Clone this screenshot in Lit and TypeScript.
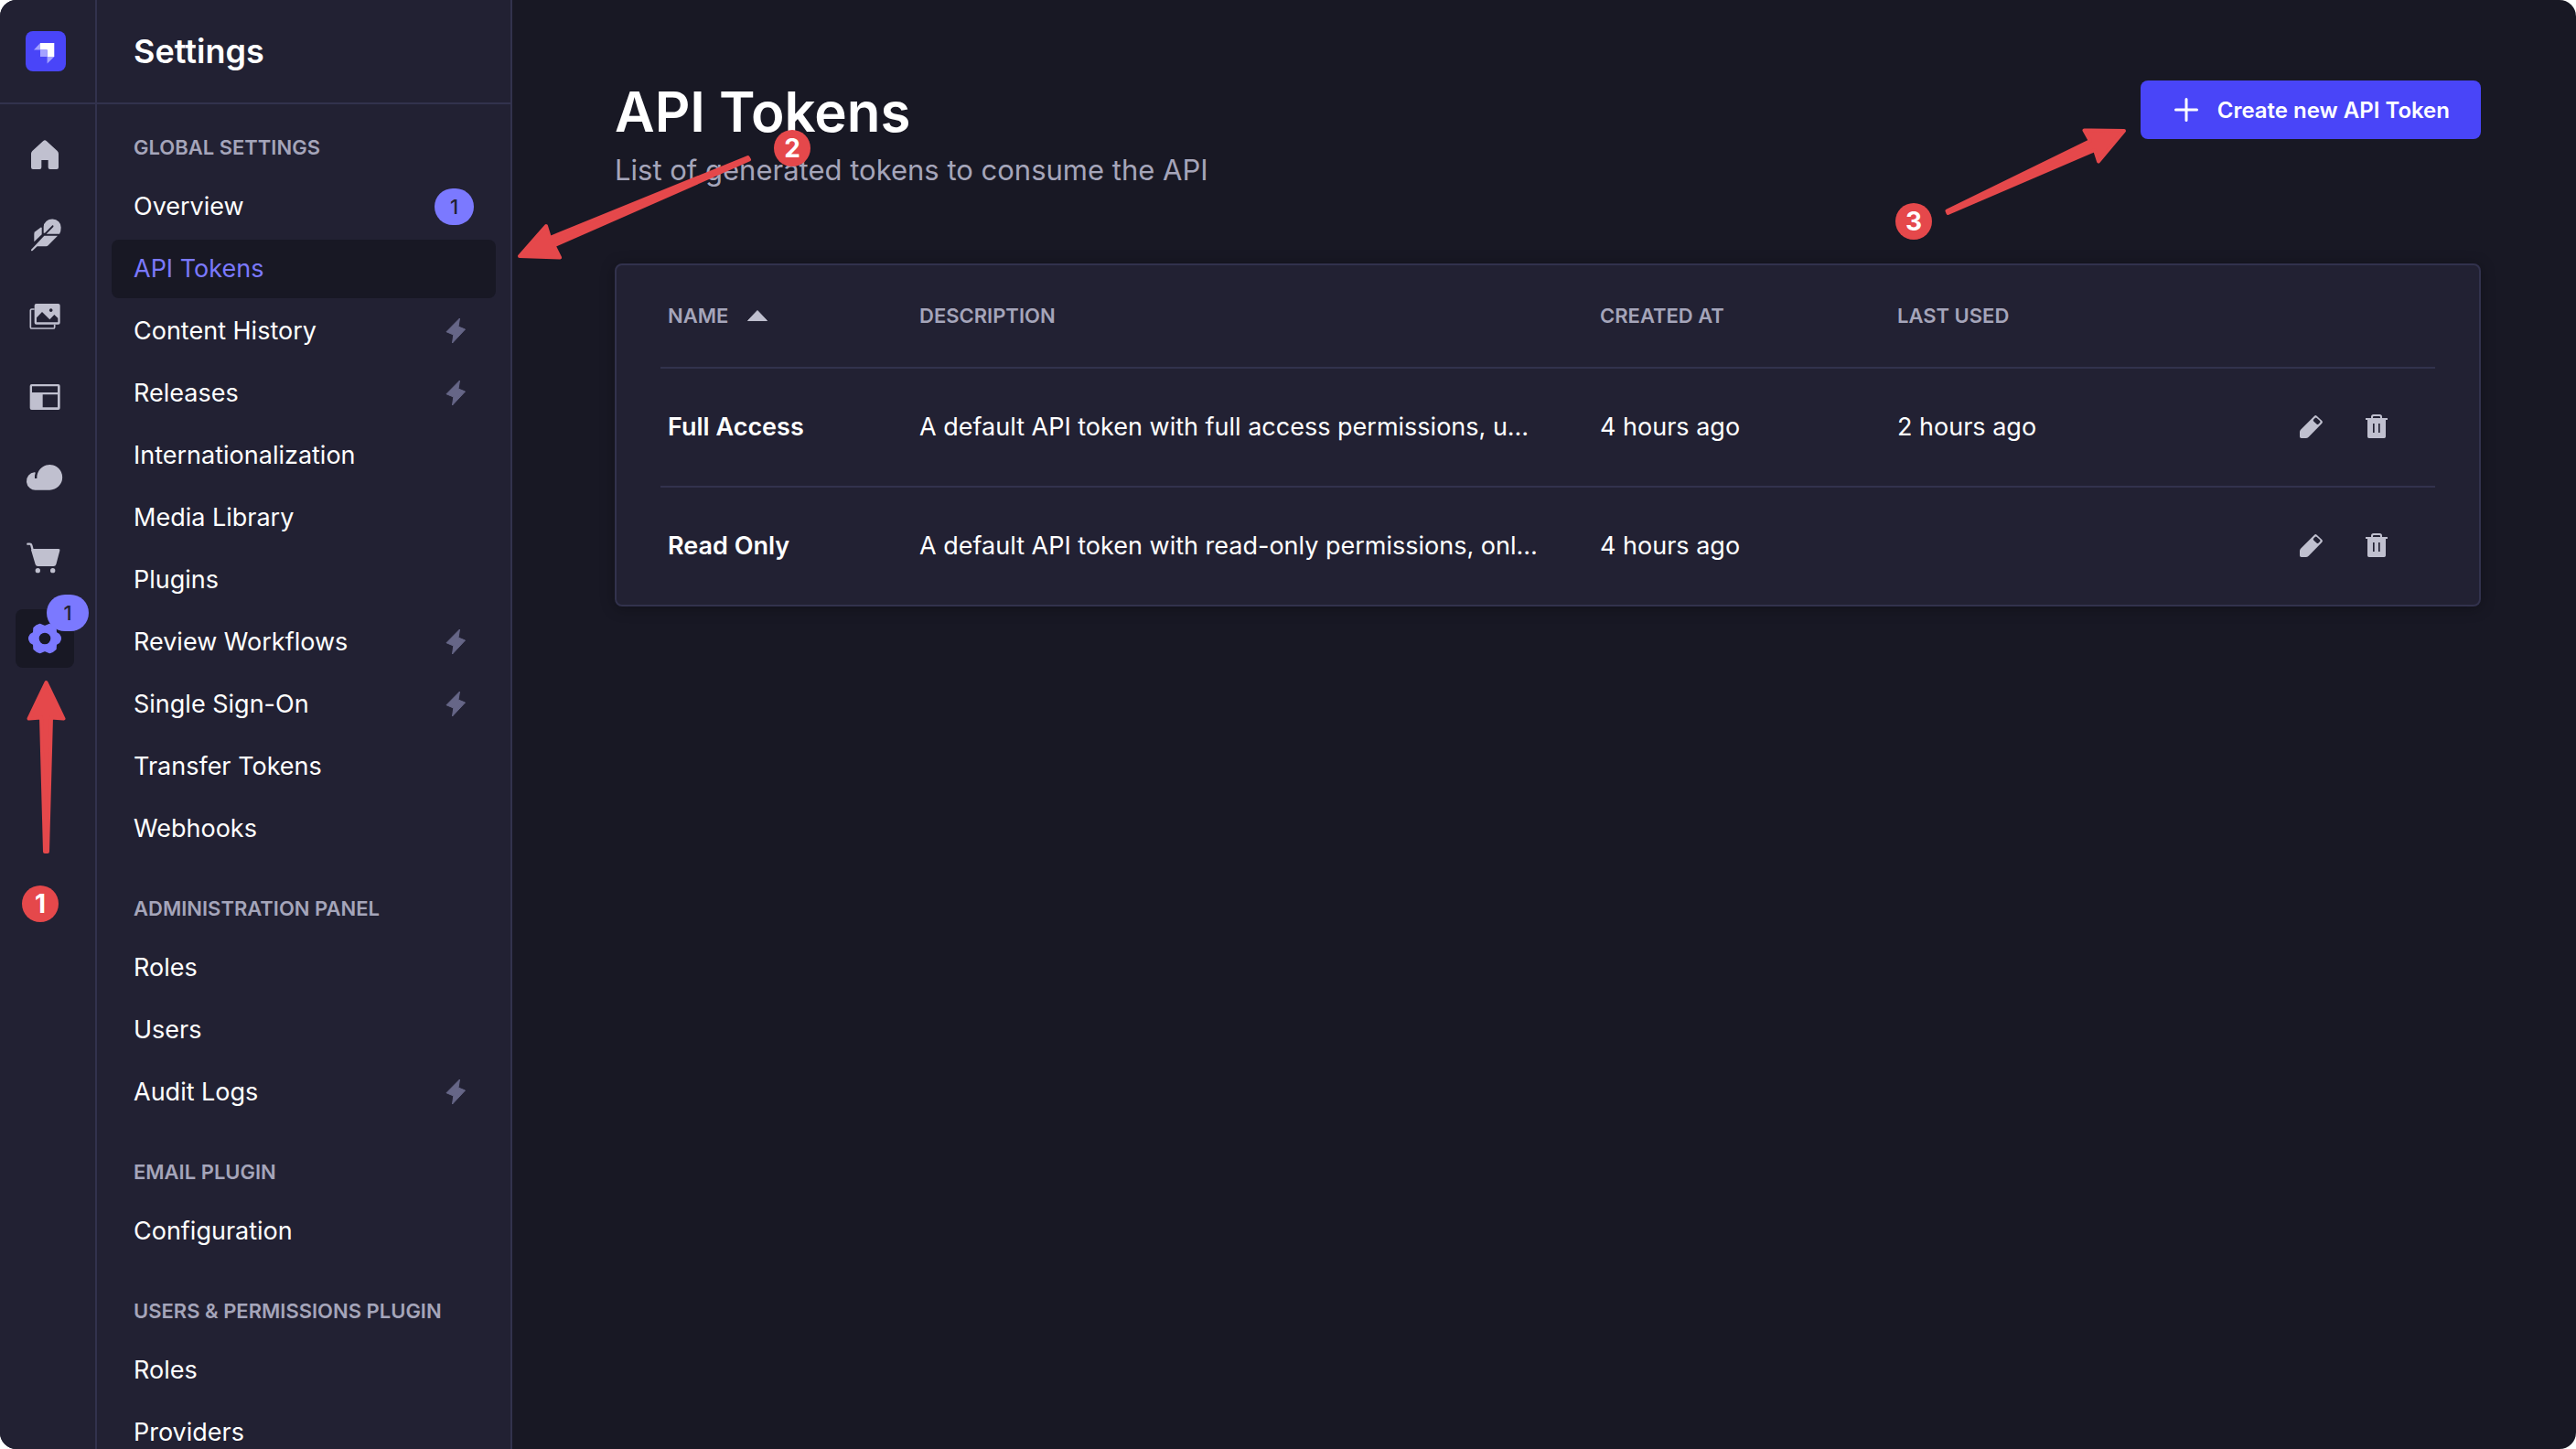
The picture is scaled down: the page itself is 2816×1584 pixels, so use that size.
import { LitElement, html, css, svg, nothing } from "lit";
import type { TemplateResult, SVGTemplateResult } from "lit";
import { customElement, property } from "lit/decorators.js";
import { classMap } from "lit/directives/class-map.js";

interface NavItem {
  label: string;
  active?: boolean;
  badge?: string;
  paid?: boolean;
}

interface NavSection {
  title: string;
  items: NavItem[];
}

interface Token {
  name: string;
  description: string;
  createdAt: string;
  lastUsed: string;
}

interface Glyph {
  box: string;
  shape: SVGTemplateResult;
}

const glyphs: Record<string, Glyph> = {
  home: {
    box: "99 102 96 96",
    shape: svg`<path d="M102 144Q102 139 106 135L142 102Q147 98 152 102L188 135Q192 139 192 144V189Q192 195 186 195H164Q158 195 158 189V165H136V189Q136 195 130 195H108Q102 195 102 189Z"/>`,
  },
  feather: {
    box: "99 366 96 96",
    shape: svg`<path d="M143 404V384A28 26 0 0 1 200 386Q200 400 195 407H152L175 384Q177 378 172 379L147 404Z"/><path d="M112 433V407Q112 403 115 400L133 386Q137 384 137 388V409Z"/><path d="M145 413H189L158 445Q155 448 151 448H122L107 462Q101 465 102 459Z"/>`,
  },
  images: {
    box: "99 630 96 96",
    shape: svg`<path fill-rule="evenodd" d="M119 636H191Q197 636 197 642V698Q197 704 191 704H119Q113 704 113 698V642Q113 636 119 636ZM120 697H190V683L178 672L163 688L138 663L120 682ZM167 652A5.500 5.500 0 1 0 167.100 652Z"/><path fill="none" stroke="currentColor" stroke-width="5" stroke-linejoin="round" d="M113 654H104Q100 654 100 658V713Q100 717 104 717H174Q179 717 179 713V704"/>`,
  },
  layout: {
    box: "99 114 96 96",
    shape: svg`<path fill-rule="evenodd" d="M104 120H191Q197 120 197 126V198Q197 204 191 204H104Q98 204 98 198V126Q98 120 104 120ZM105 127V147H189V127ZM140 154V196H189V154Z"/>`,
  },
  cloud: {
    box: "99 378 96 96",
    shape: svg`<path d="M119 467A29 29 0 0 1 113 409Q116 408 116 411Q113 419 114 429H121C120 405 138 384 163 384A41 41 0 0 1 163 467Z"/>`,
  },
  cart: {
    box: "99 642 96 96",
    shape: svg`<path d="M106 660H192Q198 660 196 666L184 711Q182 717 176 717H124Q118 717 116 711L102 664Z"/><path fill="none" stroke="currentColor" stroke-width="7" stroke-linecap="round" stroke-linejoin="round" d="M91 644H98Q102 644 103 648L107 664"/><circle cx="124" cy="731" r="8"/><circle cx="173" cy="731" r="8"/>`,
  },
  gear: {
    box: "-48 -48 96 96",
    shape: svg`<path fill-rule="evenodd" stroke="currentColor" stroke-width="4" stroke-linejoin="round" d="M47 -13Q57 0 47 13L37 19L36 35Q28 44 16 47L0 40L-16 47Q-28 44 -36 35L-37 19L-47 13Q-57 0 -47 -13L-37 -19L-36 -35Q-28 -44 -16 -47L0 -40L16 -47Q28 -44 36 -35L37 -19ZM0 -21A21 21 0 1 0 0 21A21 21 0 1 0 0 -21Z"/>`,
  },
  pencil: {
    box: "60 63 96 96",
    shape: svg`<path fill-rule="evenodd" d="M72 127Q72 122 75 119L120 74Q124 70 128 74L145 90Q149 94 145 98L101 143Q97 147 92 147H77Q72 147 72 142ZM117 86Q115 89 118 92L128 101Q131 103 133 101L139 95Q141 93 138 90L128 81Q125 78 122 81Z"/>`,
  },
  trash: {
    box: "276 63 96 96",
    shape: svg`<path fill-rule="evenodd" d="M288 81H306V77Q306 69 314 69H334Q342 69 342 77V81H360V87H354V142Q354 147 349 147H299Q294 147 294 142V87H288ZM312 81H336V78Q336 75 333 75H315Q312 75 312 78ZM312 99V129H317V99ZM330 99V129H335V99Z"/>`,
  },
  plus: {
    box: "0 0 32 32",
    shape: svg`<path fill="none" stroke="currentColor" stroke-width="3" stroke-linecap="round" d="M16 4.500V27.500M4.500 16H27.500"/>`,
  },
  bolt: {
    box: "0 0 32 32",
    shape: svg`<path stroke="currentColor" stroke-linejoin="round" d="M20.500 2L19 11L26.500 14L12.500 29L13.800 20L6 16.700Z"/>`,
  },
  sort: {
    box: "0 0 24 24",
    shape: svg`<path stroke="currentColor" stroke-linejoin="round" d="M12 6.500L22.500 17.500H1.500Z"/>`,
  },
};

const icon = (name: string): TemplateResult => html`
  <svg class="icon ${name}" viewBox=${glyphs[name].box} aria-hidden="true">${glyphs[name].shape}</svg>
`;

const iconStyles = css`
  .icon {
    display: block;
    width: 32px;
    height: 32px;
    flex: none;
    overflow: visible;
    fill: currentColor;
  }
`;

const reset = css`
  * {
    box-sizing: border-box;
  }
  a {
    color: inherit;
    text-decoration: none;
  }
  h1,
  h2,
  p,
  ul {
    margin: 0;
    padding: 0;
  }
  ul {
    list-style: none;
  }
  button {
    font: inherit;
    border: 0;
    margin: 0;
    padding: 0;
    color: inherit;
    background: none;
    cursor: pointer;
  }
`;

@customElement("main-rail")
export class MainRail extends LitElement {
  static styles = [
    reset,
    iconStyles,
    css`
      :host {
        display: block;
        border-right: 2px solid #32324d;
        background: #222133;
      }
      .brand {
        display: flex;
        justify-content: center;
        height: 114px;
        padding: 34px 22px 0 18px;
        border-bottom: 2px solid #32324d;
      }
      .logo {
        display: block;
        width: 44px;
        height: 44px;
      }
      .links {
        display: flex;
        flex-direction: column;
        gap: 24px;
        padding: 24px 23px 24px 17px;
      }
      .link {
        position: relative;
        display: grid;
        place-items: center;
        width: 64px;
        height: 64px;
        border-radius: 8px;
        color: #c0c0cf;
      }
      .link.active {
        background: #181824;
        color: #7b79ff;
      }
      .badge {
        position: absolute;
        top: -16px;
        right: -16px;
        width: 46px;
        border-radius: 20px;
        background: #7b79ff;
        color: #222133;
        font-size: 22px;
        font-weight: 500;
        line-height: 40px;
        text-align: center;
      }
    `,
  ];

  private links = [
    { icon: "home", label: "Home" },
    { icon: "feather", label: "Content Manager" },
    { icon: "images", label: "Media Library" },
    { icon: "layout", label: "Content-Type Builder" },
    { icon: "cloud", label: "Deploy" },
    { icon: "cart", label: "Marketplace" },
    { icon: "gear", label: "Settings", active: true, badge: "1" },
  ];

  render() {
    return html`
      <div class="brand">
        <a href="#home" aria-label="Dashboard">
          <svg class="logo" viewBox="0 0 44 44" aria-hidden="true">
            <rect width="44" height="44" rx="8" fill="#4945f8" />
            <path fill="#fff" d="M16 13H31.300V28H23.600V20.600H16Z" />
            <path fill="#a4a2ff" d="M16 20.600H23.600V28H16ZM9 20.600L16 13V20.600ZM23.600 35.500V28H31.300Z" />
          </svg>
        </a>
      </div>
      <ul class="links">
        ${this.links.map(
          (l) => html`<li>
            <a class=${classMap({ link: true, active: !!l.active })} href="#${l.icon}" aria-label=${l.label}>
              ${icon(l.icon)} ${l.badge ? html`<span class="badge">${l.badge}</span>` : nothing}
            </a>
          </li>`
        )}
      </ul>
    `;
  }
}

@customElement("settings-nav")
export class SettingsNav extends LitElement {
  @property({ attribute: false }) sections: NavSection[] = [];

  static styles = [
    reset,
    iconStyles,
    css`
      :host {
        display: block;
        border-right: 2px solid #32324d;
        background: #222133;
        overflow: hidden;
      }
      .title {
        height: 114px;
        padding: 0 40px;
        border-bottom: 2px solid #32324d;
        font-size: 36px;
        font-weight: 600;
        line-height: 112px;
      }
      .sections {
        display: flex;
        flex-direction: column;
        gap: 40px;
        padding: 32px 16px;
      }
      .section {
        display: flex;
        flex-direction: column;
        gap: 18px;
      }
      .heading {
        padding: 0 24px;
        color: #a5a5ba;
        font-size: 22px;
        font-weight: 600;
        line-height: 30px;
        text-transform: uppercase;
        white-space: nowrap;
      }
      .items {
        display: flex;
        flex-direction: column;
        gap: 4px;
      }
      .item {
        display: flex;
        align-items: center;
        justify-content: space-between;
        height: 64px;
        padding: 0 24px;
        border-radius: 8px;
        font-size: 27px;
        line-height: 40px;
      }
      .item.active {
        background: #181824;
        color: #7b79ff;
      }
      .item.paid {
        padding-right: 28px;
      }
      .bolt {
        color: #666687;
      }
      .badge {
        width: 43px;
        border-radius: 22px;
        background: #7b79ff;
        color: #222133;
        font-size: 22px;
        font-weight: 500;
        line-height: 40px;
        text-align: center;
      }
    `,
  ];

  render() {
    return html`
      <h2 class="title">Settings</h2>
      <div class="sections">
        ${this.sections.map(
          (s) => html`<section class="section">
            <div class="heading">${s.title}</div>
            <ul class="items">
              ${s.items.map(
                (i) => html`<li>
                  <a class=${classMap({ item: true, active: !!i.active, paid: !!i.paid })} href="#settings">
                    <span>${i.label}</span>
                    ${i.badge ? html`<span class="badge">${i.badge}</span>` : nothing}
                    ${i.paid ? icon("bolt") : nothing}
                  </a>
                </li>`
              )}
            </ul>
          </section>`
        )}
      </div>
    `;
  }
}

@customElement("token-table")
export class TokenTable extends LitElement {
  @property({ attribute: false }) tokens: Token[] = [];

  static styles = [
    reset,
    iconStyles,
    css`
      :host {
        display: block;
        padding: 0 48px;
        border: 2px solid #32324d;
        border-radius: 8px;
        background: #222133;
        box-shadow: 0 2px 16px rgba(3, 3, 5, 0.3);
      }
      .table {
        width: 100%;
        table-layout: fixed;
        border-collapse: separate;
        border-spacing: 0;
        font-size: 27px;
        line-height: 40px;
      }
      th,
      td {
        padding: 0 8px;
        text-align: left;
        vertical-align: middle;
        white-space: nowrap;
        border-bottom: 2px solid #32324d;
      }
      th {
        height: 113px;
        padding-bottom: 2px;
        color: #a5a5ba;
        font-size: 22px;
        font-weight: 600;
        text-transform: uppercase;
      }
      td {
        height: 130px;
      }
      tr:last-child td {
        height: 128px;
        border-bottom: 0;
      }
      .name {
        width: 275px;
      }
      .created {
        width: 325px;
      }
      .used {
        width: 400px;
      }
      .actions {
        width: 196px;
      }
      .sorter {
        display: flex;
        align-items: center;
        gap: 20px;
        text-transform: inherit;
      }
      .sort {
        width: 24px;
        height: 24px;
        color: #c0c0cf;
      }
      .strong {
        font-weight: 600;
      }
      .clip {
        padding-right: 40px;
      }
      .clip div {
        overflow: hidden;
        text-overflow: ellipsis;
      }
      .tools {
        display: flex;
        justify-content: flex-end;
        gap: 8px;
        padding-right: 24px;
      }
      .tool {
        display: grid;
        place-items: center;
        width: 64px;
        height: 64px;
        color: #c0c0cf;
      }
    `,
  ];

  render() {
    return html`
      <table class="table">
        <thead>
          <tr>
            <th class="name" aria-sort="ascending">
              <button class="sorter" type="button">Name ${icon("sort")}</button>
            </th>
            <th>Description</th>
            <th class="created">Created at</th>
            <th class="used">Last used</th>
            <th class="actions" aria-label="Actions"></th>
          </tr>
        </thead>
        <tbody>
          ${this.tokens.map(
            (t) => html`<tr>
              <td class="strong">${t.name}</td>
              <td class="clip"><div>${t.description}</div></td>
              <td>${t.createdAt}</td>
              <td>${t.lastUsed}</td>
              <td>
                <div class="tools">
                  <button class="tool" type="button" aria-label="Edit ${t.name}">${icon("pencil")}</button>
                  <button class="tool" type="button" aria-label="Delete ${t.name}">${icon("trash")}</button>
                </div>
              </td>
            </tr>`
          )}
        </tbody>
      </table>
    `;
  }
}

@customElement("app-root")
export class AppRoot extends LitElement {
  static styles = [
    reset,
    iconStyles,
    css`
      :host {
        display: block;
        background: #fff;
        font-family: Inter, "Liberation Sans", sans-serif;
        color: #fff;
      }
      .shell {
        position: relative;
        display: grid;
        grid-template-columns: auto 454px 1fr;
        height: 100vh;
        overflow: hidden;
        border-radius: 18px;
        background: #181824;
      }
      .main {
        display: flex;
        flex-direction: column;
        gap: 78px;
        min-width: 0;
        padding: 88px 104px 88px 112px;
      }
      .head {
        display: flex;
        align-items: flex-start;
        justify-content: space-between;
      }
      .heading {
        display: flex;
        flex-direction: column;
        gap: 6px;
      }
      .title {
        font-size: 60px;
        font-weight: 600;
        line-height: 68px;
      }
      .lead {
        color: #a5a5ba;
        font-size: 31px;
        line-height: 48px;
      }
      .create {
        display: flex;
        align-items: center;
        gap: 18px;
        height: 64px;
        padding: 0 34px;
        border-radius: 8px;
        background: #4945f8;
        font-size: 24px;
        font-weight: 600;
        white-space: nowrap;
      }
      .arrow {
        position: absolute;
        overflow: visible;
        fill: #e5484b;
        stroke: #e5484b;
        stroke-width: 4px;
        stroke-linejoin: round;
        pointer-events: none;
      }
      .step {
        position: absolute;
        width: 40px;
        border-radius: 50%;
        background: #e5484b;
        font-size: 28px;
        font-weight: 700;
        line-height: 40px;
        text-align: center;
      }
      .arrow-1 {
        left: 28px;
        top: 744px;
      }
      .step-1 {
        left: 24px;
        top: 968px;
      }
      .arrow-2 {
        left: 566px;
        top: 170px;
      }
      .step-2 {
        left: 846px;
        top: 142px;
      }
      .arrow-3 {
        right: 492px;
        top: 139px;
      }
      .step-3 {
        right: 704px;
        top: 222px;
      }
    `,
  ];

  private sections: NavSection[] = [
    {
      title: "Global settings",
      items: [
        { label: "Overview", badge: "1" },
        { label: "API Tokens", active: true },
        { label: "Content History", paid: true },
        { label: "Releases", paid: true },
        { label: "Internationalization" },
        { label: "Media Library" },
        { label: "Plugins" },
        { label: "Review Workflows", paid: true },
        { label: "Single Sign-On", paid: true },
        { label: "Transfer Tokens" },
        { label: "Webhooks" },
      ],
    },
    {
      title: "Administration panel",
      items: [{ label: "Roles" }, { label: "Users" }, { label: "Audit Logs", paid: true }],
    },
    { title: "Email plugin", items: [{ label: "Configuration" }] },
    { title: "Users & permissions plugin", items: [{ label: "Roles" }, { label: "Providers" }] },
  ];

  private tokens: Token[] = [
    {
      name: "Full Access",
      description: "A default API token with full access permissions, u…",
      createdAt: "4 hours ago",
      lastUsed: "2 hours ago",
    },
    {
      name: "Read Only",
      description: "A default API token with read-only permissions, onl…",
      createdAt: "4 hours ago",
      lastUsed: "",
    },
  ];

  render() {
    return html`
      <div class="shell">
        <main-rail></main-rail>
        <settings-nav .sections=${this.sections}></settings-nav>
        <main class="main">
          <header class="head">
            <div class="heading">
              <h1 class="title">API Tokens</h1>
              <p class="lead">List of generated tokens to consume the API</p>
            </div>
            <button class="create" type="button">${icon("plus")} Create new API Token</button>
          </header>
          <token-table .tokens=${this.tokens}></token-table>
        </main>
        <svg class="arrow arrow-1" width="44" height="190" viewBox="0 0 44 190" aria-hidden="true">
          <path d="M22.500 2L41.500 41.500L28 40.500L24 187H21L17 40.500L3.500 41.500Z" />
        </svg>
        <span class="step step-1">1</span>
        <svg class="arrow arrow-2" width="256" height="116" viewBox="0 0 256 116" aria-hidden="true">
          <path d="M2 110L31 77L35 90L251.500 2L253 4.500L39.500 98.500L46 111.500Z" />
        </svg>
        <span class="step step-2">2</span>
        <svg class="arrow arrow-3" width="200" height="98" viewBox="0 0 200 98" aria-hidden="true">
          <path d="M198 4L170 37.500L166 25L5.500 94L4.500 91.500L161 15L154.500 3.500Z" />
        </svg>
        <span class="step step-3">3</span>
      </div>
    `;
  }
}
